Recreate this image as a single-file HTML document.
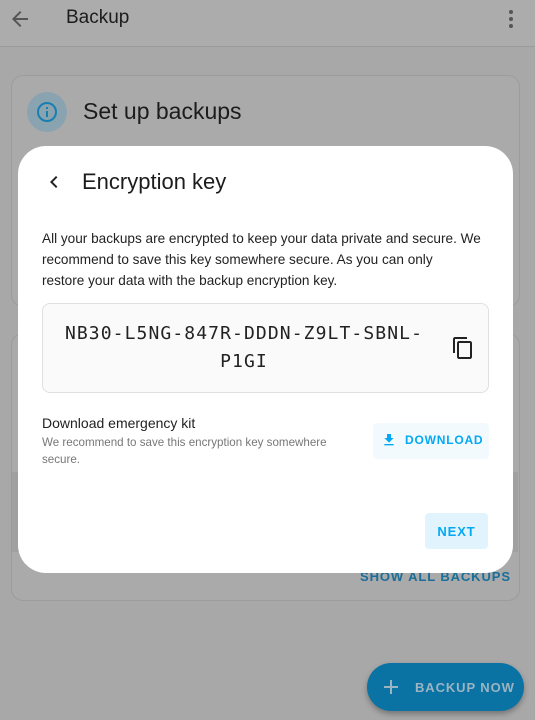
<!DOCTYPE html>
<html><head><style>
body{margin:0;width:535px;height:720px;background:#a8a8a8;font-family:"Liberation Sans",sans-serif;position:relative;overflow:hidden}
.abs{position:absolute}
.card{position:absolute;border:1px solid #9c9c9c;border-radius:12px;background:#aaaaaa}
</style></head><body>
<div class="abs" style="left:0;top:0;width:535px;height:46px;background:#acacac;border-bottom:1px solid #9a9a9a"></div>
<svg class="abs" style="left:8px;top:7px" width="24" height="24" viewBox="0 0 24 24"><path d="M20 11H7.8l5.6-5.6L12 4l-8 8 8 8 1.4-1.4L7.8 13H20z" fill="#555"/></svg>
<div class="abs" style="left:66px;top:7px;font-size:19px;color:#1c1c1c">Backup</div>
<svg class="abs" style="left:499px;top:7px" width="24" height="24" viewBox="0 0 24 24"><circle cx="12" cy="5" r="2" fill="#555"/><circle cx="12" cy="12" r="2" fill="#555"/><circle cx="12" cy="19" r="2" fill="#555"/></svg>
<div class="card" style="left:11px;top:75px;width:507px;height:230px"></div>
<div class="abs" style="left:27px;top:92px;width:40px;height:40px;border-radius:50%;background:#8aa3b0"></div>
<svg class="abs" style="left:35px;top:100px" width="24" height="24" viewBox="0 0 24 24"><circle cx="12" cy="12" r="9" fill="none" stroke="#1a7fb0" stroke-width="2"/><rect x="11" y="11" width="2" height="6" fill="#1a7fb0"/><rect x="11" y="7" width="2" height="2" fill="#1a7fb0"/></svg>
<div class="abs" style="left:83px;top:98px;font-size:23px;color:#1c1c1c">Set up backups</div>
<div class="card" style="left:11px;top:333px;width:507px;height:266px"></div>
<div class="abs" style="left:12px;top:472px;width:506px;height:80px;background:#a0a0a0"></div>
<div class="abs" style="left:360px;top:569px;font-size:13px;font-weight:bold;letter-spacing:0.9px;color:#1a6e99">SHOW ALL BACKUPS</div>
<div class="abs" style="left:367px;top:663px;width:157px;height:48px;border-radius:24px;background:#0b72a4;box-shadow:0 3px 6px rgba(0,0,0,.3)"></div>
<svg class="abs" style="left:379px;top:675px" width="24" height="24" viewBox="0 0 24 24"><path d="M11 5h2v6h6v2h-6v6h-2v-6H5v-2h6z" fill="#9ab4c2"/></svg>
<div class="abs" style="left:415px;top:680px;font-size:13px;font-weight:bold;letter-spacing:0.9px;color:#9ab4c2">BACKUP NOW</div>

<div class="abs" style="left:18px;top:146px;width:495px;height:427px;background:#fff;border-radius:28px"></div>
<svg class="abs" style="left:42px;top:170px" width="24" height="24" viewBox="0 0 24 24"><path d="M15.4 7.4L14 6l-6 6 6 6 1.4-1.4L10.8 12z" fill="#222"/></svg>
<div class="abs" style="left:82px;top:169px;font-size:22px;color:#1c1c1c">Encryption key</div>
<div class="abs" style="left:42px;top:228px;width:452px;font-size:13.6px;line-height:21px;color:#222">All your backups are encrypted to keep your data private and secure. We recommend to save this key somewhere secure. As you can only<br>restore your data with the backup encryption key.</div>
<div class="abs" style="left:42px;top:303px;width:445px;height:88px;border:1px solid #e0e0e0;border-radius:8px;background:#fafafa"></div>
<div class="abs" style="left:44px;top:320px;width:400px;text-align:center;font-family:'DejaVu Sans Mono',monospace;font-size:18px;line-height:28px;color:#222;letter-spacing:1.1px">NB30-L5NG-847R-DDDN-Z9LT-SBNL-<br>P1GI</div>
<svg class="abs" style="left:451px;top:336px" width="24" height="24" viewBox="0 0 24 24"><path d="M16 1H4c-1.1 0-2 .9-2 2v14h2V3h12V1zm3 4H8c-1.1 0-2 .9-2 2v14c0 1.1.9 2 2 2h11c1.1 0 2-.9 2-2V7c0-1.1-.9-2-2-2zm0 16H8V7h11v14z" fill="#222"/></svg>
<div class="abs" style="left:42px;top:415px;font-size:14px;color:#222">Download emergency kit</div>
<div class="abs" style="left:42px;top:434px;width:310px;font-size:11.6px;line-height:17px;color:#777">We recommend to save this encryption key somewhere<br>secure.</div>
<div class="abs" style="left:373px;top:423px;width:116px;height:36px;border-radius:4px;background:#f3fafe"></div>
<svg class="abs" style="left:381px;top:432px" width="16" height="16" viewBox="0 0 24 24"><path d="M5 20h14v-2H5v2zM19 9h-4V3H9v6H5l7 7 7-7z" fill="#03a9f4"/></svg>
<div class="abs" style="left:405px;top:433px;font-size:12px;font-weight:bold;letter-spacing:0.8px;color:#03a9f4">DOWNLOAD</div>
<div class="abs" style="left:425px;top:513px;width:63px;height:36px;border-radius:4px;background:#e1f4fd"></div>
<div class="abs" style="left:425px;top:524px;width:63px;text-align:center;font-size:13px;font-weight:bold;letter-spacing:0.9px;color:#03a9f4">NEXT</div>
</body></html>
